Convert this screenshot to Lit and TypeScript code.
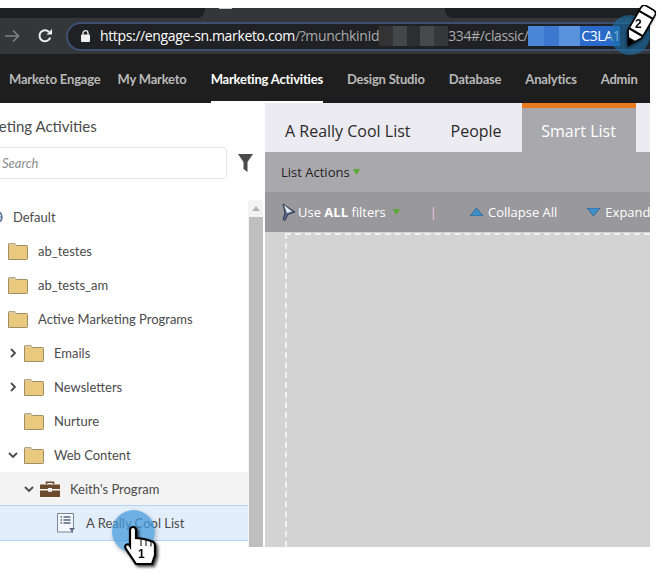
import { LitElement, css, html, nothing, svg } from 'lit';
import { customElement } from 'lit/decorators.js';

type TreeRow = {
  label: string;
  depth: number;
  icon: 'globe' | 'folder' | 'case' | 'list';
  toggle?: 'open' | 'closed';
  state?: 'parent' | 'selected';
};

const navItems = ['My Marketo', 'Marketing Activities', 'Design Studio', 'Database', 'Analytics', 'Admin'];

const treeRows: TreeRow[] = [
  { label: 'Default', depth: 0, icon: 'globe' },
  { label: 'ab_testes', depth: 0, icon: 'folder' },
  { label: 'ab_tests_am', depth: 0, icon: 'folder' },
  { label: 'Active Marketing Programs', depth: 0, icon: 'folder' },
  { label: 'Emails', depth: 1, icon: 'folder', toggle: 'closed' },
  { label: 'Newsletters', depth: 1, icon: 'folder', toggle: 'closed' },
  { label: 'Nurture', depth: 1, icon: 'folder' },
  { label: 'Web Content', depth: 1, icon: 'folder', toggle: 'open' },
  { label: "Keith's Program", depth: 2, icon: 'case', toggle: 'open', state: 'parent' },
  { label: 'A Really Cool List', depth: 3, icon: 'list', state: 'selected' },
];

const icons = {
  globe: svg`<svg class="ico globe" viewBox="0 0 14 14"><circle cx="7" cy="7" r="6" fill="#dfe6f0" stroke="#5f7796" stroke-width="1.6"/><path d="M7 1v12M1 7h12" stroke="#5f7796"/></svg>`,
  folder: svg`<svg class="ico" viewBox="0 0 20 17"><path d="M.5 16.5V1.2q0-.7.7-.7h5.6l1.6 2h10.4q.7 0 .7.7v12.6q0 .7-.7.7H1.2q-.7 0-.7-.7Z" fill="#e8c97d" stroke="#a08f66"/><path d="M1 1.200h5.600l1.600 2" fill="none" stroke="#d9d3c4"/></svg>`,
  case: svg`<svg class="ico" viewBox="0 0 20 17"><path d="M6.500 3V1.200h7V3" fill="none" stroke="#6e4a2c" stroke-width="1.600"/><path d="M0 3.500h20V8H12V7H8v1H0Z" fill="#6e4a2c"/><path d="M0 9.500h8v1.200h4V9.500h8V16H0Z" fill="#6e4a2c"/></svg>`,
  list: svg`<svg class="ico list" viewBox="0 0 18 20"><path d="M.5.5h16v13.500l-3 5H.5Z" fill="#f4f8fd" stroke="#76869a"/><path d="M3.500 4h1.500M6.500 4h7M3.500 7h1.500M6.500 7h7M3.500 10h1.500M6.500 10h7" stroke="#55677c" stroke-width="1.400"/><path d="M12 15h6l-2.200 2.400V20h-1.400v-2.600Z" fill="#55677c"/></svg>`,
};

@customElement('app-root')
export class AppRoot extends LitElement {
  static styles = css`
    :host {
      display: block;
      position: relative;
      width: 660px;
      height: 577px;
      overflow: hidden;
      background: #fff;
      font-family: 'Lato', 'Open Sans', sans-serif;
    }

    svg {
      flex: none;
    }

    .shot {
      width: 650px;
      height: 539px;
      margin-top: 8px;
      display: flex;
      flex-direction: column;
      overflow: hidden;
    }

    /* browser chrome */
    .strip {
      flex: none;
      height: 10px;
      display: flex;
      background: #35363a;
    }
    .strip .left {
      width: 205px;
      background: #1f2023;
      border-bottom-right-radius: 8px;
    }
    .strip .mid {
      width: 240px;
    }
    .strip .tick {
      width: 13px;
      height: 1px;
      margin-left: 14px;
      background: #c9c9c9;
    }
    .strip .right {
      flex: 1;
      background: #1f2023;
      border-bottom-left-radius: 8px;
    }
    .toolbar {
      flex: none;
      height: 36px;
      display: flex;
      align-items: center;
      background: #35363a;
    }
    .back {
      width: 15px;
      height: 14px;
      margin-left: 5px;
    }
    .reload {
      width: 16px;
      height: 16px;
      margin-left: 17px;
    }
    .pill {
      flex: none;
      width: 640px;
      height: 29px;
      margin-left: 13px;
      box-sizing: border-box;
      display: flex;
      align-items: center;
      padding-left: 13px;
      border: 2px solid #3c5170;
      border-radius: 15px;
      background: #202124;
      font: 14px/20px 'Open Sans', sans-serif;
      letter-spacing: -0.36px;
      color: #a9abae;
      white-space: nowrap;
    }
    .lock {
      width: 9px;
      height: 12px;
      margin-right: 10px;
    }
    .host {
      color: #fff;
    }
    .mosaic {
      width: 69px;
      height: 20px;
      background: linear-gradient(90deg, #333 0 20%, #45464a 20% 40%, #2d2e31 40% 60%, #47484b 60% 80%, #36373a 80%);
    }
    .selection {
      width: 92px;
      height: 20px;
      display: flex;
      color: #fff;
      background: #2a6ac8;
    }
    .selection i {
      width: 52px;
      margin-right: 1px;
      background: linear-gradient(90deg, #4a86d8 0 30%, #3c78cf 30% 60%, #5a93dd 60%);
    }

    /* app nav */
    .nav {
      flex: none;
      height: 49px;
      display: flex;
      align-items: stretch;
      background: #1e1e1e;
      font-size: 13px;
      font-weight: 700;
      letter-spacing: -0.2px;
      color: #b9b9b9;
      white-space: nowrap;
    }
    .logo {
      align-self: center;
      width: 2px;
      height: 16px;
      background: #fff;
      border-radius: 0 2px 2px 0;
    }
    .brand {
      margin: 0 17px 0 7px;
      display: flex;
      align-items: center;
      padding-left: 2px;
    }
    .nav-item {
      margin-right: 24px;
      display: flex;
      align-items: center;
      box-sizing: border-box;
      border-bottom: 2px solid transparent;
      border-top: 2px solid transparent;
    }
    .nav-item.active {
      color: #fff;
      border-bottom-color: #fff;
    }

    /* page body */
    .body {
      flex: 1;
      min-height: 0;
      display: flex;
    }
    .side {
      flex: none;
      width: 265px;
      display: flex;
      flex-direction: column;
      background: #fff;
      overflow: hidden;
    }
    .side h2 {
      margin: 12px 0 0 -35px;
      font-size: 15px;
      line-height: 22px;
      font-weight: 400;
      color: #4b4b4b;
      white-space: nowrap;
    }
    .search-row {
      display: flex;
      align-items: center;
      margin: 10px 0 21px;
    }
    .search {
      width: 237px;
      height: 32px;
      margin-left: -10px;
      box-sizing: border-box;
      padding-left: 11px;
      display: flex;
      align-items: center;
      border: 1px solid #e6e6e6;
      border-radius: 3px;
      font-size: 13px;
      font-style: italic;
      color: #8b8b8b;
    }
    .funnel {
      width: 15px;
      height: 18px;
      margin-left: 11px;
    }
    .tree-wrap {
      flex: 1;
      min-height: 0;
      display: flex;
    }
    .tree {
      flex: none;
      width: 248px;
    }
    .row {
      height: 34px;
      box-sizing: border-box;
      display: flex;
      align-items: center;
      gap: 10px;
      font-size: 13px;
      color: #4b4b4b;
      white-space: nowrap;
    }
    .row.parent {
      background: #f3f3f3;
    }
    .row.selected {
      height: 36px;
      margin-top: -1px;
      background: #e3eefb;
      box-shadow: inset 0 1px #b5d3f5, inset 0 -1px #b5d3f5;
    }
    .row.globe-row {
      gap: 0;
      padding-left: 13px;
    }
    .toggle {
      width: 10px;
      height: 10px;
      margin: 0 -4px 0 -16px;
    }
    .ico {
      width: 20px;
      height: 17px;
    }
    .ico.globe {
      width: 14px;
      height: 14px;
      margin-left: -24px;
      margin-right: 10px;
    }
    .ico.list {
      width: 18px;
      height: 20px;
      margin-left: 1px;
      margin-right: 1px;
    }
    .scroll {
      flex: none;
      width: 17px;
      display: flex;
      flex-direction: column;
      align-items: center;
      background: #f3f3f3;
      box-shadow: inset -2px 0 #fff;
    }
    .scroll .up {
      width: 0;
      height: 0;
      margin: 6px 2px 6px 0;
      border: 4px solid transparent;
      border-top: 0;
      border-bottom: 5px solid #b5b5b5;
    }
    .scroll .thumb {
      flex: 1;
      width: 14px;
      margin-right: 2px;
      background: #bfbfbf;
    }

    /* main */
    .main {
      flex: 1;
      min-width: 0;
      display: flex;
      flex-direction: column;
      background: #d3d3d3;
    }
    .tabs {
      flex: none;
      height: 49px;
      display: flex;
      align-items: stretch;
      background: #ecebf1;
      font: 16px 'Open Sans', sans-serif;
      color: #2a2a2a;
    }
    .tab {
      display: flex;
      align-items: center;
      box-sizing: border-box;
      padding-top: 6px;
    }
    .tab.first {
      margin: 0 40px 0 20px;
    }
    .tab.second {
      margin-right: 20px;
    }
    .tab.current {
      width: 114px;
      justify-content: center;
      border-top: 5px solid #ea7a1e;
      padding-top: 1px;
      background: #a9a8ad;
      color: #fff;
    }
    .actions {
      flex: none;
      height: 40px;
      display: flex;
      align-items: center;
      padding-left: 16px;
      background: #a9a8ad;
      font: 13px 'Open Sans', sans-serif;
      color: #222;
    }
    .drop {
      width: 7px;
      height: 6px;
      margin-left: 3px;
    }
    .filters {
      flex: none;
      height: 40px;
      display: flex;
      align-items: center;
      padding-left: 16px;
      background: #99989c;
      font: 13px 'Open Sans', sans-serif;
      color: #fff;
      white-space: nowrap;
    }
    .filters .cone {
      width: 15px;
      height: 18px;
      margin-right: 2px;
    }
    .filters .drop {
      margin-left: 7px;
    }
    .filters .pipe {
      margin: 0 33px 0 30px;
      color: #f7c6de;
    }
    .filters .tri {
      width: 13px;
      height: 8px;
      margin-right: 5px;
    }
    .filters .gap {
      margin-right: 30px;
    }
    .canvas {
      flex: 1;
      margin: 1px 0 0 20px;
      border-top: 2px dashed #f1f1f1;
      border-left: 2px dashed #f1f1f1;
    }

    /* callouts over the screenshot */
    .halo {
      position: absolute;
      border-radius: 50%;
    }
    .halo.one {
      left: 112px;
      top: 510px;
      width: 43px;
      height: 43px;
      background: rgba(66, 153, 219, 0.72);
      box-shadow: 1px 2px 4px rgba(0, 0, 0, 0.25);
    }
    .halo.two {
      left: 610px;
      top: 15px;
      width: 40px;
      height: 40px;
      background: rgba(28, 112, 168, 0.62);
    }
    .pointer {
      position: absolute;
      left: 124px;
      top: 525px;
      width: 36px;
      height: 40px;
      filter: drop-shadow(2px 2px 1.5px rgba(0, 0, 0, 0.75));
    }
    .pencil {
      position: absolute;
      left: 620px;
      top: 5px;
      width: 36px;
      height: 44px;
      filter: drop-shadow(-1px 2px 1px rgba(0, 0, 0, 0.55));
    }
    .callout-num {
      font: 700 12px 'Liberation Sans', sans-serif;
      fill: #000;
    }
  `;

  private renderRow(row: TreeRow) {
    const cls = ['row', row.state ?? '', row.icon === 'globe' ? 'globe-row' : ''].join(' ');
    // every level moves the icon 16px to the right
    const indent = row.icon === 'globe' ? nothing : `padding-left:${8 + row.depth * 16}px`;
    return html`
      <div class=${cls} style=${indent}>
        ${row.toggle
          ? html`<svg class="toggle" viewBox="0 0 10 10">
              <path
                d=${row.toggle === 'open' ? 'M1 3l4 4 4-4' : 'M3 1l4 4-4 4'}
                fill="none"
                stroke="#4b4b4b"
                stroke-width="1.8"
              />
            </svg>`
          : nothing}
        ${icons[row.icon]}
        <span>${row.label}</span>
      </div>
    `;
  }

  render() {
    return html`
      <div class="shot">
        <div class="strip">
          <div class="left"></div>
          <div class="mid"><div class="tick"></div></div>
          <div class="right"></div>
        </div>
        <div class="toolbar">
          <svg class="back" viewBox="0 0 15 14">
            <path d="M0 7h13M8 1.500 13.500 7 8 12.500" fill="none" stroke="#7f8083" stroke-width="1.700" />
          </svg>
          <svg class="reload" viewBox="0 0 16 16">
            <path d="M13.200 9.600A5.500 5.500 0 1 1 12 4" fill="none" stroke="#f1f1f1" stroke-width="2" />
            <path d="M9.500 6.500h5.500V1Z" fill="#f1f1f1" />
          </svg>
          <div class="pill">
            <svg class="lock" viewBox="0 0 9 12">
              <path d="M2 5V3.200a2.500 2.500 0 0 1 5 0V5" fill="none" stroke="#f1f1f1" stroke-width="1.300" />
              <rect y="4.600" width="9" height="7.400" rx="1" fill="#f1f1f1" />
            </svg>
            <span class="host">https://engage-sn.marketo.com</span><span>/?munchkinId</span>
            <span class="mosaic"></span><span>334#/classic/</span>
            <span class="selection"><i></i>C3LA1</span>
          </div>
        </div>

        <div class="nav">
          <div class="logo"></div>
          <div class="brand">Marketo Engage</div>
          ${navItems.map(
            (item) =>
              html`<div class="nav-item ${item === 'Marketing Activities' ? 'active' : ''}">${item}</div>`,
          )}
        </div>

        <div class="body">
          <div class="side">
            <h2>Marketing Activities</h2>
            <div class="search-row">
              <div class="search">Search</div>
              <svg class="funnel" viewBox="0 0 15 18">
                <path d="M0 0h15L9.500 8v10l-4-3V8Z" fill="#4a4a4a" />
              </svg>
            </div>
            <div class="tree-wrap">
              <div class="tree">${treeRows.map((row) => this.renderRow(row))}</div>
              <div class="scroll">
                <div class="up"></div>
                <div class="thumb"></div>
              </div>
            </div>
          </div>

          <div class="main">
            <div class="tabs">
              <div class="tab first">A Really Cool List</div>
              <div class="tab second">People</div>
              <div class="tab current">Smart List</div>
            </div>
            <div class="actions">
              List Actions
              <svg class="drop" viewBox="0 0 7 6"><path d="M0 0h7L3.500 6Z" fill="#5da832" /></svg>
            </div>
            <div class="filters">
              <svg class="cone" viewBox="0 0 15 18">
                <path d="M2 1 14 9 7 11.500 4 17.500 2 16.500 4 10Z" fill="#56698a" stroke="#1f2a3a" stroke-width=".8" />
                <path d="M3 2 11 8.500 6 10Z" fill="#e6ebf3" />
              </svg>
              <span>Use <b>ALL</b> filters</span>
              <svg class="drop" viewBox="0 0 7 6"><path d="M0 0h7L3.500 6Z" fill="#5da832" /></svg>
              <span class="pipe">|</span>
              <svg class="tri" viewBox="0 0 13 8"><path d="M6.500 0 13 8H0Z" fill="#3f8fc9" stroke="#1f4f7a" stroke-width=".6" /></svg>
              <span class="gap">Collapse All</span>
              <svg class="tri" viewBox="0 0 13 8"><path d="M0 0h13L6.500 8Z" fill="#3f8fc9" stroke="#1f4f7a" stroke-width=".6" /></svg>
              <span>Expand All</span>
            </div>
            <div class="canvas"></div>
          </div>
        </div>
      </div>

      <div class="halo two"></div>
      <svg class="pencil" viewBox="0 0 36 44">
        <g transform="translate(19 22) rotate(30)">
          <path d="M-8-18q0-4 4-4h8q4 0 4 4v26L0 21-8 8Z" fill="#fff" stroke="#000" stroke-width="1.600" />
          <path d="M-8-14H8M-8 6H8" stroke="#000" stroke-width="2.200" />
          <path d="M-3.500 14 0 21 3.500 14Z" fill="#000" />
        </g>
        <text class="callout-num" x="15" y="23">2</text>
      </svg>

      <div class="halo one"></div>
      <svg class="pointer" viewBox="0 0 36 40">
        <path
          d="M6 5a3 3 0 0 1 6 0v8l5 .5 5 1 5 1.500q4 1 4 5v9l-3 9H12L2 24q-2-4 1-4.500 2-.3 3 1.500Z"
          fill="#fff"
          stroke="#000"
          stroke-width="2.200"
        />
        <path d="M17 14v7M22 15v6M27 16.500v5" stroke="#000" />
        <text class="callout-num" x="14" y="33">1</text>
      </svg>
    `;
  }
}
